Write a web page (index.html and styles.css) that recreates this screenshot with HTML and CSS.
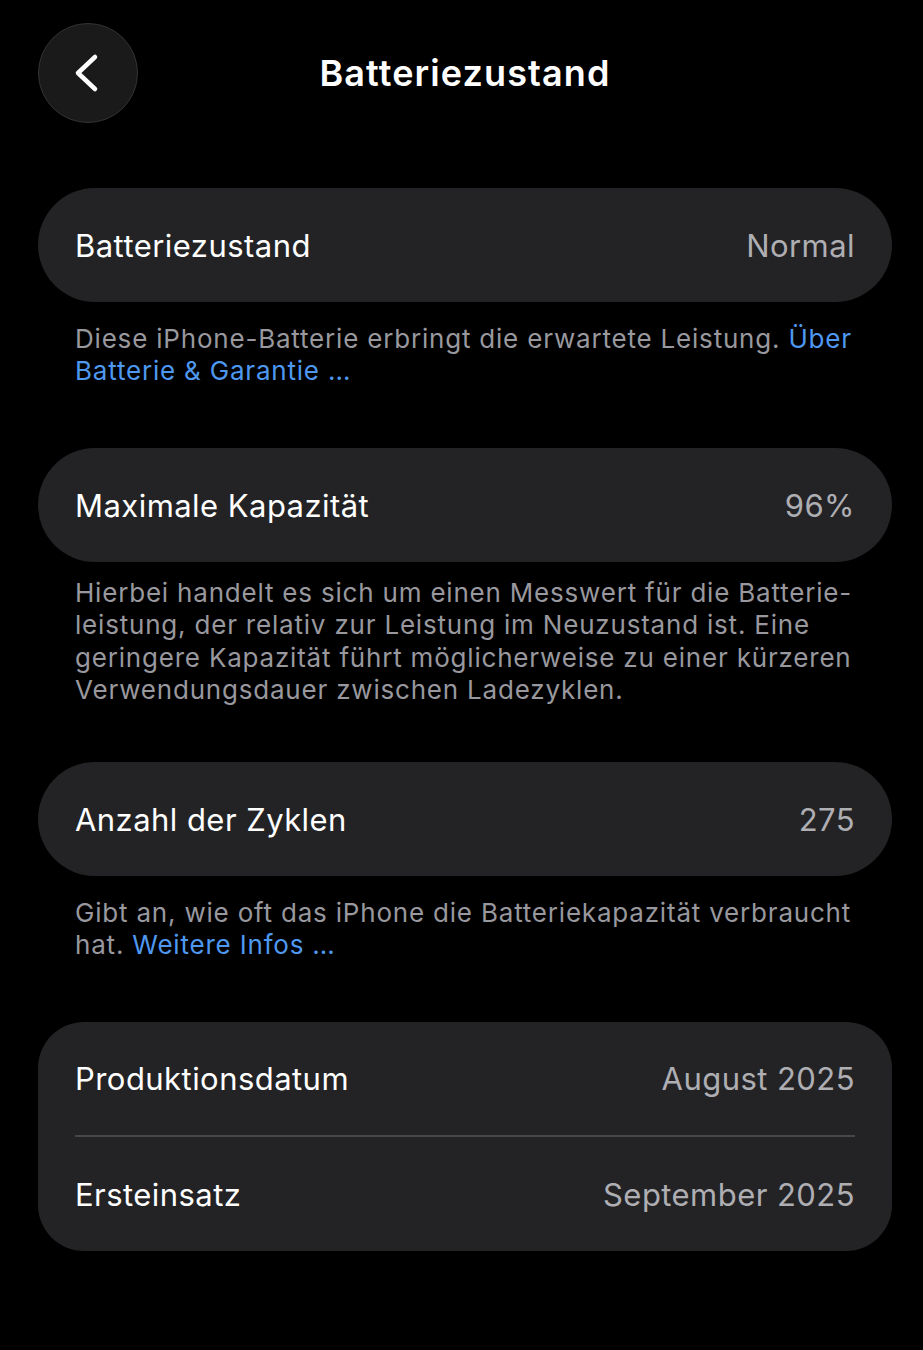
FILE: index.html
```html
<!DOCTYPE html>
<html lang="de">
<head>
    <meta charset="UTF-8">
    <meta name="viewport" content="width=device-width, initial-scale=1.0">
    <title>Batteriezustand</title>
    <link rel="stylesheet" href="styles.css">
</head>
<body>
    <div class="page">
        <header class="nav">
            <button class="back" aria-label="Zurück">
                <svg width="30" height="40" viewBox="0 0 30 40">
                    <path d="M23 4 L6 20 L23 36" fill="none" stroke="#fff" stroke-width="4.5" stroke-linecap="round" stroke-linejoin="round"/>
                </svg>
            </button>
            <h1>Batteriezustand</h1>
            <span class="spacer"></span>
        </header>

        <section class="group">
            <div class="row">
                <span class="label">Batteriezustand</span>
                <span class="value">Normal</span>
            </div>
        </section>
        <p class="note">Diese iPhone-Batterie erbringt die erwartete Leistung. <a href="#">Über Batterie &amp; Garantie …</a></p>

        <section class="group">
            <div class="row">
                <span class="label">Maximale Kapazität</span>
                <span class="value">96%</span>
            </div>
        </section>
        <p class="note long">Hierbei handelt es sich um einen Messwert für die Batterie-<br>leistung, der relativ zur Leistung im Neuzustand ist. Eine geringere Kapazität führt möglicherweise zu einer kürzeren Verwendungsdauer zwischen Ladezyklen.</p>

        <section class="group">
            <div class="row">
                <span class="label">Anzahl der Zyklen</span>
                <span class="value">275</span>
            </div>
        </section>
        <p class="note">Gibt an, wie oft das iPhone die Batteriekapazität verbraucht hat. <a href="#">Weitere Infos …</a></p>

        <section class="group list">
            <div class="row">
                <span class="label">Produktionsdatum</span>
                <span class="value">August 2025</span>
            </div>
            <div class="row">
                <span class="label">Ersteinsatz</span>
                <span class="value">September 2025</span>
            </div>
        </section>
    </div>
</body>
</html>
```

FILE: styles.css
```css
body {
    margin: 0;
    background-color: #000;
    color: #fff;
    font-family: Inter, "Liberation Sans", sans-serif;
}
.page {
    padding: 23px 31px 40px 38px;
}
.nav {
    display: grid;
    grid-template-columns: 100px 1fr 100px;
    align-items: center;
    margin-bottom: 65px;
}
.nav h1 {
    margin: 0;
    text-align: center;
    font-size: 36px;
    font-weight: 600;
    letter-spacing: 1.1px;
}
.back {
    width: 100px;
    height: 100px;
    border-radius: 50%;
    border: 1.5px solid #333335;
    background: #1a1a1b;
    display: flex;
    align-items: center;
    justify-content: center;
    padding: 0;
    cursor: pointer;
}
.back svg {
    margin-left: -3px;
}
.group {
    background-color: #232325;
    border-radius: 57px;
}
.group.list {
    border-radius: 46px;
}
.row {
    height: 114px;
    padding: 0 37px;
    display: flex;
    align-items: center;
    justify-content: space-between;
    font-size: 31px;
    letter-spacing: 0.45px;
}
.list .row + .row {
    border-top: 2px solid #47474b;
    margin: 0 37px;
    padding: 0;
    height: 114px;
}
.list .row:first-child {
    height: 113px;
}
.value {
    color: #aeaeb3;
}
.note {
    margin: 0;
    padding: 21px 30px 0 37px;
    height: 125px;
    font-size: 26px;
    line-height: 32.4px;
    color: #98989e;
    letter-spacing: 0.8px;
}
.note.long {
    height: 185px;
    padding-top: 15px;
}
.note a {
    color: #4e98f0;
    text-decoration: none;
}
```
